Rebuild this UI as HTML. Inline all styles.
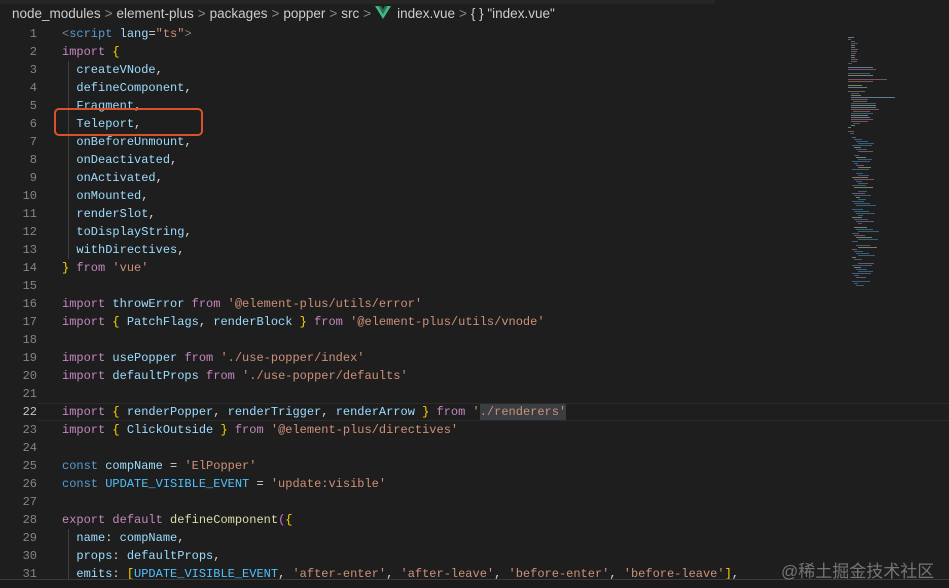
<!DOCTYPE html>
<html><head><meta charset="utf-8"><style>
body{margin:0;width:949px;height:587px;background:#1e1e1e;overflow:hidden;position:relative;font-family:"Liberation Mono",monospace}
.top{position:absolute;left:0;top:0;width:715px;height:4px;background:#262626}
.bc{position:absolute;left:12px;top:6px;font:13.5px "Liberation Sans",sans-serif;color:#cccccc;white-space:pre}
.bc .s{color:#888;margin:0 4px}
.ln{position:absolute;left:0;width:37px;text-align:right;color:#858585;font-size:12px;line-height:18px}
.code{position:absolute;left:62px;font-size:12px;line-height:18px;color:#d4d4d4;white-space:pre}
.k{color:#c586c0}.b{color:#569cd6}.v{color:#9cdcfe}.s1{color:#ce9178}.y{color:#ffd700}.f{color:#dcdcaa}.g{color:#808080}.c{color:#4fc1ff}.p{color:#da70d6}
.guide{position:absolute;left:68px;width:1px;background:#404040}
.mm{position:absolute;height:1px;opacity:.5}
</style></head><body>
<div class="top"></div>
<div class="bc">node_modules<span class="s">&gt;</span>element-plus<span class="s">&gt;</span>packages<span class="s">&gt;</span>popper<span class="s">&gt;</span>src<span class="s">&gt;</span><svg width="16" height="13" viewBox="0 0 16 13" style="vertical-align:-1px;margin-right:6px"><path d="M0 0h3.5L8 8 12.5 0H16L8 13z" fill="#41b883"/><path d="M3.5 0h2.6L8 3.2 9.9 0h2.6L8 8z" fill="#2b6e57"/></svg>index.vue<span class="s">&gt;</span>{ } "index.vue"</div>
<div style="position:absolute;left:38px;top:403px;width:911px;height:18px;border-top:1px solid #2c2c2c;border-bottom:1px solid #2c2c2c;box-sizing:border-box"></div>
<div style="position:absolute;left:480px;top:404px;width:86px;height:16px;background:#3a3d41"></div>
<div class="guide" style="top:61px;height:198px"></div>
<div class="guide" style="top:529px;height:50px"></div>
<div class="ln" style="top:25px">1<br>2<br>3<br>4<br>5<br>6<br>7<br>8<br>9<br>10<br>11<br>12<br>13<br>14<br>15<br>16<br>17<br>18<br>19<br>20<br>21<br><span style="color:#c6c6c6">22</span><br>23<br>24<br>25<br>26<br>27<br>28<br>29<br>30<br>31</div>
<div class="code" style="top:25px"><span class="g">&lt;</span><span class="b">script</span> <span class="v">lang</span>=<span class="s1">"ts"</span><span class="g">&gt;</span>
<span class="k">import</span> <span class="y">{</span>
  <span class="v">createVNode</span>,
  <span class="v">defineComponent</span>,
  <span class="v">Fragment</span>,
  <span class="v">Teleport</span>,
  <span class="v">onBeforeUnmount</span>,
  <span class="v">onDeactivated</span>,
  <span class="v">onActivated</span>,
  <span class="v">onMounted</span>,
  <span class="v">renderSlot</span>,
  <span class="v">toDisplayString</span>,
  <span class="v">withDirectives</span>,
<span class="y">}</span> <span class="k">from</span> <span class="s1">'vue'</span>

<span class="k">import</span> <span class="v">throwError</span> <span class="k">from</span> <span class="s1">'@element-plus/utils/error'</span>
<span class="k">import</span> <span class="y">{</span> <span class="v">PatchFlags</span>, <span class="v">renderBlock</span> <span class="y">}</span> <span class="k">from</span> <span class="s1">'@element-plus/utils/vnode'</span>

<span class="k">import</span> <span class="v">usePopper</span> <span class="k">from</span> <span class="s1">'./use-popper/index'</span>
<span class="k">import</span> <span class="v">defaultProps</span> <span class="k">from</span> <span class="s1">'./use-popper/defaults'</span>

<span class="k">import</span> <span class="y">{</span> <span class="v">renderPopper</span>, <span class="v">renderTrigger</span>, <span class="v">renderArrow</span> <span class="y">}</span> <span class="k">from</span> <span class="s1">'./renderers'</span>
<span class="k">import</span> <span class="y">{</span> <span class="v">ClickOutside</span> <span class="y">}</span> <span class="k">from</span> <span class="s1">'@element-plus/directives'</span>

<span class="b">const</span> <span class="v">compName</span> = <span class="s1">'ElPopper'</span>
<span class="b">const</span> <span class="c">UPDATE_VISIBLE_EVENT</span> = <span class="s1">'update:visible'</span>

<span class="k">export</span> <span class="k">default</span> <span class="f">defineComponent</span><span class="p">(</span><span class="y">{</span>
  <span class="v">name</span>: <span class="v">compName</span>,
  <span class="v">props</span>: <span class="v">defaultProps</span>,
  <span class="v">emits</span>: <span class="y">[</span><span class="c">UPDATE_VISIBLE_EVENT</span>, <span class="s1">'after-enter'</span>, <span class="s1">'after-leave'</span>, <span class="s1">'before-enter'</span>, <span class="s1">'before-leave'</span><span class="y">]</span>,</div>
<div style="position:absolute;left:54px;top:108px;width:149px;height:28px;border:2.5px solid #d9532a;border-radius:5px;box-sizing:border-box"></div>
<div id="mm"></div>
<div style="position:absolute;left:0;top:579px;width:949px;height:8px;background:#1b1b1b;border-top:1px solid #3a3a3a"></div>
<div style="position:absolute;left:781px;top:557px;font:17px 'Liberation Sans','Noto Sans CJK SC',sans-serif;color:#8a8a8a;opacity:.8">@稀土掘金技术社区</div>
<script>
var m=document.getElementById('mm'),h='';
var cols=['#9cdcfe','#c586c0','#ce9178','#569cd6','#dcdcaa'];
var data=[[0,10],[0,6],[3,8],[3,12],[3,7],[3,7],[3,12],[3,10],[3,9],[3,8],[3,8],[3,12],[3,11],[0,7],[0,0],[0,45],[0,50],[0,0],[0,40],[0,45],[0,0],[0,70],[0,45],[0,0],[0,25],[0,35],[0,0],[0,30],[3,14],[3,18],[3,80],[3,30],[5,25],[3,45],[3,45],[3,45],[3,50],[5,30],[3,40],[3,30],[3,35],[3,40],[3,30],[5,12],[3,8],[0,5],[0,0],[0,10],[2,8]];
for(var i=0;i<data.length;i++){if(!data[i][1])continue;h+='<div class="mm" style="left:'+(848+data[i][0])+'px;top:'+(37+i*2)+'px;width:'+(data[i][1]*0.55)+'px;background:'+cols[i%5]+'"></div>';}
for(var j=0;j<75;j++){if(j%9==8)continue;var w=(j*37%30)+6,ind=(j*13%4)*2;h+='<div class="mm" style="left:'+(852+ind)+'px;top:'+(137+j*2)+'px;width:'+(w*0.6)+'px;background:'+(j%7==0?'#c586c0':(j%5==0?'#dcdcaa':'#4f9fd6'))+'"></div>';}
m.innerHTML=h;
</script>
</body></html>
